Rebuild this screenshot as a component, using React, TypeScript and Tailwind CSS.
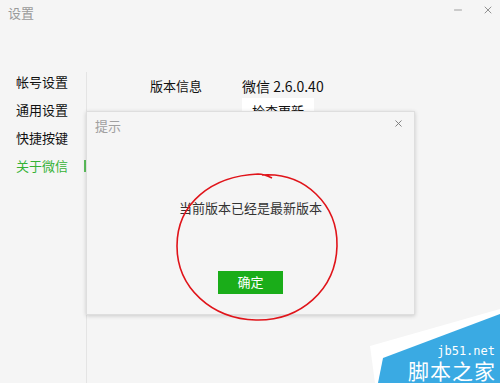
import { X, Minus } from 'lucide-react'

const menu = ['帐号设置', '通用设置', '快捷按键', '关于微信']

export default function App() {
  return (
    <div
      className="relative w-[500px] h-[383px] overflow-hidden bg-[#f5f5f5] text-[13px] text-[#1a1a1a]"
      style={{ fontFamily: '"Noto Sans CJK SC", "Liberation Sans", sans-serif' }}
    >
      {/* Title bar */}
      <div className="flex items-center h-[26px] pl-2 pr-[6px]">
        <span className="text-[#9a9a9a] text-[13px]">设置</span>
        <div className="ml-auto flex items-center gap-[18px] -mt-[6px]">
          <Minus className="w-[12px] h-[12px] text-[#666]" strokeWidth={1.2} />
          <X className="w-[12px] h-[12px] text-[#777]" strokeWidth={1.6} />
        </div>
      </div>

      <div className="flex h-[357px]">
        {/* Sidebar */}
        <div className="w-[86px] shrink-0 pt-[42px] pl-4">
          {menu.map((m, i) => (
            <div
              key={m}
              className={`h-[28px] flex items-center ${i === 3 ? 'text-[#35b235]' : 'text-[#111]'}`}
            >
              {m}
            </div>
          ))}
        </div>
        <div className="relative w-px mt-[46px] bg-[#e4e4e4]">
          <div className="absolute left-[-2px] top-[88px] w-[2px] h-[12px] bg-[#5cc15c]" />
        </div>

        {/* Content */}
        <div className="flex-1 pl-[63px] pt-[50px]">
          <div className="flex">
            <div className="w-[92px] text-[#111]">版本信息</div>
            <div>
              <div className="text-[#111] text-[14px] leading-[20px]">微信 2.6.0.40</div>
              <div className="mt-[2px] w-[72px] h-[26px] bg-white flex items-center justify-center text-[#111]">
                检查更新
              </div>
            </div>
          </div>
        </div>
      </div>

      {/* Dialog */}
      <div className="absolute left-[86px] top-[111px] w-[329px] h-[204px] bg-[#f5f5f5] border border-[#dedede] shadow-[0_1px_4px_rgba(0,0,0,0.18)] flex flex-col">
        <div className="flex items-center h-[28px] pl-2 pr-[10px]">
          <span className="text-[#a0a0a0] text-[13px]">提示</span>
          <X className="ml-auto -mt-[6px] w-[11px] h-[11px] text-[#777]" strokeWidth={2} />
        </div>
        <div className="mt-[58px] text-center text-[#333] text-[13px]">当前版本已经是最新版本</div>
        <div className="mt-[53px] flex justify-center">
          <div className="w-[65px] h-[23px] bg-[#1aad19] text-white text-[13px] flex items-center justify-center">
            确定
          </div>
        </div>
      </div>

      {/* Red annotation circle */}
      <svg className="absolute left-0 top-0 pointer-events-none" width="500" height="383">
        <path
          d="M 262 175 C 305 172, 338 205, 337 246 C 336 290, 300 321, 256 320 C 212 319, 177 288, 177 246 C 177 203, 212 176, 258 174 C 263 174, 268 176, 272 178"
          fill="none"
          stroke="#e0141a"
          strokeWidth="1.6"
        />
      </svg>

      {/* Watermark */}
      <svg className="absolute left-0 top-0 pointer-events-none" width="500" height="383">
        <polygon points="370,346 500,309 500,383 375,383" fill="#ffffff" />
        <polygon points="378,383 383,358 500,314 500,383" fill="#3aaae3" />
      </svg>
      <div className="absolute right-[4px] bottom-0 flex flex-col items-end text-white">
        <span
          className="text-[12px] leading-[13px] pr-[1px]"
          style={{ fontFamily: '"DejaVu Sans Mono", monospace' }}
        >
          jb51.net
        </span>
        <span className="text-[21px] leading-[25px] tracking-[1px]">脚本之家</span>
      </div>
    </div>
  )
}
